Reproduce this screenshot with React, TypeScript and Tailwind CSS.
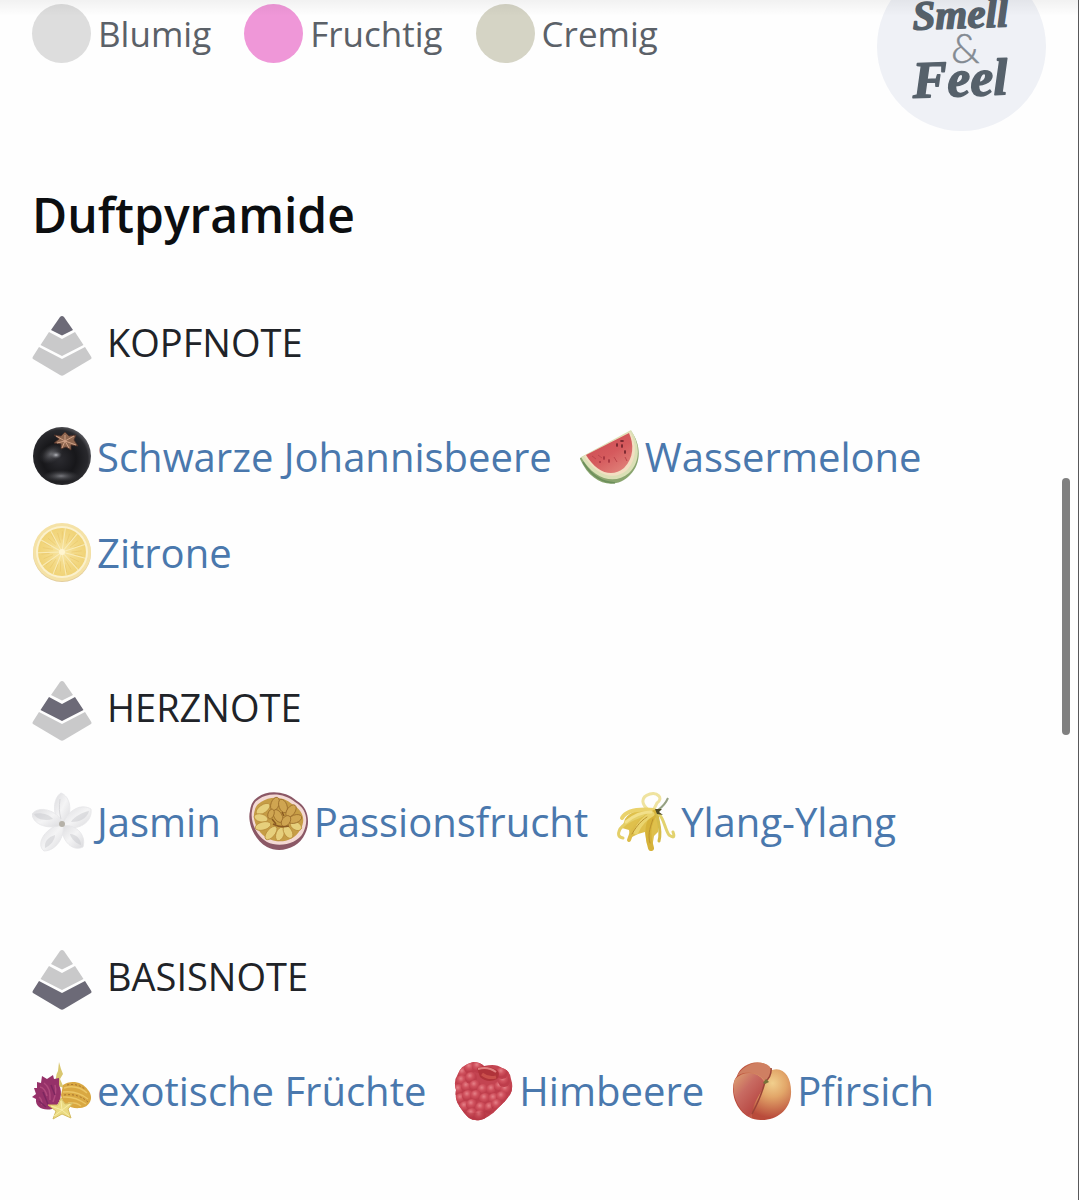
import type { ReactNode } from 'react';

type Layer = 'top' | 'middle' | 'base';

interface Ingredient {
  name: string;
  icon: ReactNode;
}

interface NoteGroup {
  title: string;
  layer: Layer;
  ingredients: Ingredient[];
}

const iconClass = 'h-[60px] w-[60px] shrink-0';

function BlackcurrantIcon() {
  return (
    <svg viewBox="0 0 60 60" className={iconClass} aria-hidden="true">
      <defs>
        <radialGradient id="currant" cx="0.45" cy="0.55" r="0.58">
          <stop offset="0" stopColor="#2c2c31" />
          <stop offset="0.5" stopColor="#17171a" />
          <stop offset="0.85" stopColor="#29292d" />
          <stop offset="1" stopColor="#606065" />
        </radialGradient>
        <radialGradient id="currantShine">
          <stop offset="0" stopColor="#b9bac0" />
          <stop offset="1" stopColor="#55565b" stopOpacity="0" />
        </radialGradient>
      </defs>
      <circle cx="30" cy="29" r="29" fill="url(#currant)" />
      <ellipse cx="19" cy="27" rx="13" ry="9" fill="url(#currantShine)" opacity="0.5" transform="rotate(-30 19 27)" />
      <ellipse cx="24" cy="28" rx="6" ry="4" fill="url(#currantShine)" />
      <ellipse cx="29" cy="49" rx="18" ry="6" fill="url(#currantShine)" opacity="0.6" />
      <path
        d="M22 8L29 9L33 5L37 9L44 8L42 13L46 19L39 18L39 23L34 20L29 22L29 17L22 16L27 12Z"
        fill="#8f6750"
        stroke="#4c3028"
        strokeWidth="0.8"
      />
      <path d="M24 9L33 14L42 9M25 16L33 14L44 18M33 8V14L30 21M33 14L37 21" stroke="#d0a186" fill="none" />
    </svg>
  );
}

function WatermelonIcon() {
  return (
    <svg viewBox="0 0 60 60" className={iconClass} aria-hidden="true">
      <defs>
        <linearGradient id="melon" x1="0" y1="0" x2="0.7" y2="1">
          <stop offset="0" stopColor="#cb4a50" />
          <stop offset="0.6" stopColor="#d55a5d" />
          <stop offset="1" stopColor="#e08078" />
        </linearGradient>
      </defs>
      <path d="M0 31L51 4C61 17 62 36 50 48C36 63 12 59 0 32Z" fill="#8aa56f" />
      <path d="M1 30L51 3C60 17 61 34 49 46C35 58 14 53 1 30Z" fill="#dbe0b6" />
      <path d="M4 29L50 5C57 18 57 33 46 44C33 54 16 48 4 29Z" fill="#f2dfc2" />
      <path d="M6 28L49 6C54 17 54 31 44 41C32 51 17 46 6 28Z" fill="url(#melon)" />
      <path d="M3 35Q15 55 35 56" stroke="#5f8653" strokeWidth="1.5" fill="none" opacity="0.7" />
      <g fill="#75272f">
        <ellipse cx="42" cy="14" rx="2" ry="1" />
        <ellipse cx="37" cy="18" rx="1" ry="2" />
        <ellipse cx="42" cy="19" rx="1" ry="2" />
        <ellipse cx="45" cy="25" rx="1" ry="2" />
      </g>
      <g fill="#a53540">
        <ellipse cx="24" cy="31" rx="1" ry="2" />
        <ellipse cx="29" cy="34" rx="1" ry="2" />
        <ellipse cx="20" cy="35" rx="1" ry="1" />
      </g>
      <path d="M18 28L22 31M34 30L37 35M45 30L47 34M12 29L16 32" stroke="#bd464c" fill="none" />
    </svg>
  );
}

const lemonSpokes = [8, 40, 72, 105, 138, 170, 202, 235, 268, 300, 332];

function LemonIcon() {
  return (
    <svg viewBox="0 0 60 60" className={iconClass} aria-hidden="true">
      <defs>
        <radialGradient id="lemon">
          <stop offset="0" stopColor="#f8e6a6" />
          <stop offset="0.6" stopColor="#f3d985" />
          <stop offset="1" stopColor="#f0d377" />
        </radialGradient>
      </defs>
      <circle cx="30" cy="30" r="29" fill="#e2cd9c" />
      <circle cx="30" cy="29" r="29" fill="#f5e2a6" />
      <circle cx="30" cy="29" r="26" fill="#fbf1cd" />
      <circle cx="30" cy="29" r="24" fill="url(#lemon)" />
      {lemonSpokes.map((angle) => (
        <g key={angle} transform={`rotate(${angle} 30 29)`}>
          <path d="M30 28V5" stroke="#fbf0c3" opacity="0.8" />
          <path d="M33 20L35 10M36 18L40 11" stroke="#e5bd5c" strokeWidth="0.7" opacity="0.5" />
        </g>
      ))}
      <circle cx="30" cy="29" r="3" fill="#fff5d0" />
    </svg>
  );
}

function JasmineIcon() {
  return (
    <svg viewBox="0 0 60 60" className={iconClass} aria-hidden="true">
      <defs>
        <linearGradient id="petal" x1="0" y1="0" x2="1" y2="1">
          <stop offset="0" stopColor="#dcdcdf" />
          <stop offset="0.5" stopColor="#f4f4f5" />
          <stop offset="1" stopColor="#dadadd" />
        </linearGradient>
      </defs>
      <g fill="url(#petal)" stroke="#e6e6e8" strokeWidth="0.8">
        <path d="M28 32C20 22 21 6 29 1C38 4 42 20 32 32Z" />
        <path d="M31 32C36 18 49 11 59 17C61 30 46 40 31 34Z" />
        <path d="M30 34C42 31 55 42 51 55C41 60 31 50 29 36Z" />
        <path d="M31 33C33 45 24 59 12 59C4 53 11 37 29 32Z" />
        <path d="M30 33C17 38 1 33 0 22C7 13 25 18 31 31Z" />
      </g>
      <g fill="#c4c5ca" opacity="0.45">
        <path d="M2 22C8 20 17 22 21 27C13 29 5 28 2 22Z" />
        <path d="M57 19C52 20 42 24 39 30C47 30 55 27 57 19Z" />
        <path d="M13 56C18 54 23 48 23 43C16 45 12 50 13 56Z" />
        <path d="M49 53C45 52 39 47 38 42C44 42 49 47 49 53Z" />
      </g>
      <path d="M28 7C27 15 27 20 29 27" fill="none" stroke="#d9d9dc" />
      <circle cx="30" cy="32" r="3" fill="#b5b1a8" />
    </svg>
  );
}

function PassionFruitIcon() {
  return (
    <svg viewBox="0 0 60 60" className={iconClass} aria-hidden="true">
      <path d="M9 5C18-2 36-2 48 9C59 15 62 30 56 42C50 56 31 62 18 55C5 48-2 30 1 19C2 13 3 9 9 5Z" fill="#8b5866" />
      <path d="M10 7C19 0 36 1 46 10C58 17 60 29 54 41C48 52 30 56 18 50C7 44 1 29 3 19C4 13 5 10 10 7Z" fill="#f3d9d4" />
      <path d="M12 10C21 4 34 4 43 12C55 19 57 29 51 38C45 49 31 52 20 47C9 42 4 29 5 22C6 16 7 13 12 10Z" fill="#c69d45" />
      <g fill="#e6cf7c" stroke="#b88d3c" strokeWidth="0.8">
        <ellipse cx="14" cy="17" rx="8" ry="4" transform="rotate(-35 14 17)" />
        <ellipse cx="12" cy="26" rx="7" ry="4" transform="rotate(15 12 26)" />
        <ellipse cx="14" cy="34" rx="8" ry="4" transform="rotate(-15 14 34)" />
        <ellipse cx="22" cy="41" rx="8" ry="4" transform="rotate(-50 22 41)" />
        <ellipse cx="31" cy="42" rx="7" ry="4" transform="rotate(-70 31 42)" />
        <ellipse cx="39" cy="40" rx="7" ry="4" transform="rotate(60 39 40)" />
        <ellipse cx="47" cy="34" rx="6" ry="4" transform="rotate(30 47 34)" />
      </g>
      <g fill="#cfa551" stroke="#9a6c2b" strokeWidth="0.8">
        <ellipse cx="26" cy="12" rx="4" ry="7" transform="rotate(20 26 12)" />
        <ellipse cx="34" cy="14" rx="4" ry="7" transform="rotate(-20 34 14)" />
        <ellipse cx="42" cy="19" rx="4" ry="7" transform="rotate(35 42 19)" />
        <ellipse cx="46" cy="27" rx="4" ry="7" transform="rotate(70 46 27)" />
        <ellipse cx="29" cy="24" rx="4" ry="7" transform="rotate(-30 29 24)" />
        <ellipse cx="37" cy="29" rx="4" ry="6" transform="rotate(35 37 29)" />
        <ellipse cx="22" cy="22" rx="3" ry="5" transform="rotate(20 22 22)" />
      </g>
      <path d="M24 32Q31 36 40 34M23 27L27 32M33 20L35 24" fill="none" stroke="#8a5a22" strokeWidth="1.5" />
    </svg>
  );
}

function YlangIcon() {
  return (
    <svg viewBox="0 0 60 60" className={iconClass} aria-hidden="true">
      <path d="M34 19C25 13 24 5 34 2C41 0 48 6 41 11L38 17" fill="none" stroke="#efe3a0" strokeWidth="3" />
      <path d="M38 17C26 17 14 19 9 27L6 36L13 38L14 46L22 42L29 40L31 52L36 56L38 44L42 40L43 24Z" fill="#dfc04c" />
      <g fill="none" strokeLinecap="round">
        <path d="M38 18C27 17 11 17 6 26" stroke="#ead26c" strokeWidth="4" />
        <path d="M37 20C24 24 11 28 4 37Q0 45 7 46" stroke="#e4cf68" strokeWidth="3" />
        <path d="M38 20C29 24 17 34 13 48" stroke="#dcbc49" strokeWidth="4" />
        <path d="M39 21C31 32 31 42 35 56" stroke="#d6b239" strokeWidth="6" />
        <path d="M36 22C27 27 23 33 20 40" stroke="#ead46e" strokeWidth="5" />
        <path d="M41 22C42 31 46 38 43 49" stroke="#d4bb49" strokeWidth="3" />
        <path d="M43 22C48 27 49 37 53 43Q60 48 57 40" stroke="#e2d26e" strokeWidth="3" />
        <path d="M35 20C25 20 17 24 10 30" stroke="#f2e08a" strokeWidth="3" />
        <path d="M37 27C33 38 32 44 34 51M31 25C23 30 19 37 16 42" stroke="#bb9330" />
      </g>
      <path d="M42 18Q49 13 52 6" fill="none" stroke="#95a183" strokeWidth="2" />
      <path d="M39 17L46 17L43 20L47 23L41 22Z" fill="#4e4a24" />
    </svg>
  );
}

function ExoticFruitsIcon() {
  return (
    <svg viewBox="0 0 60 60" className={iconClass} aria-hidden="true">
      <path d="M26 25Q22 16 26 10L27 1L29 8L31 13L28 18L32 27Z" fill="#d9c770" />
      <path
        d="M2 27L5 27L5 21L9 22L10 15L15 18L21 14L22 18L27 17L27 24C31 31 29 44 20 48C11 50 3 46 4 38L0 36L4 33Z"
        fill="#963169"
      />
      <path
        d="M8 26Q13 27 15 35M12 22Q19 27 18 39M7 36Q10 38 10 44M23 24Q25 31 21 41"
        fill="none"
        stroke="#b04a7d"
        strokeWidth="1.5"
      />
      <path d="M11 31L16 43M19 24L23 34M7 40L14 46" stroke="#7c2760" strokeWidth="1.5" fill="none" />
      <path d="M31 24C38 19 50 20 56 29C63 37 57 47 48 47C38 48 30 43 29 34Z" fill="#d9a842" />
      <path
        d="M32 27Q45 23 55 32M31 31Q45 29 56 38M31 36Q43 35 54 43M36 42Q44 41 49 45"
        fill="none"
        stroke="#ebc565"
        strokeWidth="1.5"
      />
      <path d="M35 24Q45 22 53 28M32 34Q46 32 56 41" fill="none" stroke="#a97430" strokeDasharray="2 2" />
      <path
        d="M29 37L33 43L41 42L36 48L39 57L30 53L21 58L24 50L16 44L26 44Z"
        fill="#ebdb83"
        stroke="#d5bc62"
      />
      <path d="M29 40L30 49L38 43M30 49L37 55M30 49L22 55M30 49L19 45" fill="none" stroke="#f8eda8" />
    </svg>
  );
}

const drupelets = [
  [9, 12], [16, 7], [24, 6], [8, 20], [5, 29], [13, 26], [17, 17], [21, 25], [29, 29],
  [38, 29], [46, 26], [52, 29], [50, 20], [48, 12], [7, 38], [14, 35], [22, 35],
  [31, 38], [40, 38], [48, 36], [11, 46], [18, 44], [27, 47], [36, 47], [43, 44], [18, 53], [26, 55],
];

function RaspberryIcon() {
  return (
    <svg viewBox="0 0 60 60" className={iconClass} aria-hidden="true">
      <defs>
        <radialGradient id="drupe" cx="0.4" cy="0.3">
          <stop offset="0" stopColor="#e58188" />
          <stop offset="0.5" stopColor="#d0525e" />
          <stop offset="1" stopColor="#be3d4b" />
        </radialGradient>
        <clipPath id="berryShape">
          <path d="M4 13Q7 4 19 1Q26 1 30 5Q42 2 48 7Q56 9 57 18Q60 27 56 34Q51 41 44 47Q35 57 26 59Q15 61 8 49Q0 40 2 29Q-1 20 4 13Z" />
        </clipPath>
      </defs>
      <g clipPath="url(#berryShape)">
        <path d="M0 0H60V60H0Z" fill="#c34451" />
        {drupelets.map(([x, y]) => (
          <circle key={`${x}-${y}`} cx={x} cy={y} r="6" fill="url(#drupe)" />
        ))}
        <path d="M9 50Q24 56 40 45L32 60H10Z" fill="#a92f3d" opacity="0.3" />
      </g>
      <path d="M23 7Q33 3 43 9Q47 13 43 18Q34 23 26 16Z" fill="#b0333a" />
      <path d="M24 8Q34 5 42 11" fill="none" stroke="#e08080" strokeWidth="2" />
      <path d="M28 13Q34 18 42 16" fill="none" stroke="#c94f4b" strokeWidth="3" />
    </svg>
  );
}

function PeachIcon() {
  return (
    <svg viewBox="0 0 60 60" className={iconClass} aria-hidden="true">
      <defs>
        <radialGradient id="peachRight" cx="0.68" cy="0.36" r="0.6">
          <stop offset="0" stopColor="#f1cf8d" />
          <stop offset="0.4" stopColor="#e2a669" />
          <stop offset="1" stopColor="#b94b3b" />
        </radialGradient>
        <linearGradient id="peachLeft" x1="0" y1="0" x2="0.8" y2="1">
          <stop offset="0" stopColor="#dfa673" />
          <stop offset="0.4" stopColor="#c86b62" />
          <stop offset="0.8" stopColor="#b94a45" />
          <stop offset="1" stopColor="#d9874f" />
        </linearGradient>
      </defs>
      <path d="M5 15C9 3 26-3 37 5L40 9C52 5 60 17 59 33C58 49 45 59 30 59C13 60 1 44 1 28Q1 20 5 15Z" fill="url(#peachRight)" />
      <path d="M3 18C12 9 27 10 33 22C29 34 19 42 20 57C6 51-2 31 3 18Z" fill="url(#peachLeft)" />
      <path d="M5 15C12 2 29-2 38 6L39 12L33 21C28 12 16 8 5 15Z" fill="#cf7f62" />
      <path d="M39 7Q40 15 33 21Q29 36 20 53" fill="none" stroke="#9a4338" strokeWidth="1.5" />
      <path d="M31 22L34 18L37 21L33 23Z" fill="#777239" />
    </svg>
  );
}

function PyramidIcon({ active }: { active: Layer }) {
  const fill = (layer: Layer) => (layer === active ? '#6c6a77' : '#c9c9ca');

  return (
    <svg viewBox="0 0 60 60" className={iconClass} aria-hidden="true">
      <path d="M28 1Q30-1 32 1L41 14L30 19.5L19 14Z" fill={fill('top')} />
      <path d="M17 16L30 23L43 16L51.500 29L30 40L8.500 29Z" fill={fill('middle')} />
      <path d="M7 31L30 43L53 31L59 40.500Q60 42 59 43L32 59Q30 60.500 28 59L1 43Q0 42 1 40.500Z" fill={fill('base')} />
    </svg>
  );
}

function SmellFeelLogo() {
  return (
    <div className="-mt-[38px] h-[169px] w-[169px] shrink-0 rounded-full bg-[#eff1f6]">
      <svg viewBox="0 0 169 169" className="h-full w-full" role="img" aria-label="Smell & Feel">
        <g
          fill="#56616b"
          stroke="#56616b"
          strokeWidth="1.5"
          strokeLinejoin="round"
          fontFamily="'Liberation Serif', serif"
          fontStyle="italic"
          fontWeight="700"
        >
          <text x="36" y="66" fontSize="41" transform="rotate(-2 84 66)">
            Smell
          </text>
          <text x="36" y="134" fontSize="52" transform="rotate(-2 84 134)">
            Feel
          </text>
        </g>
        <text
          x="74"
          y="101"
          fontSize="41"
          fill="#838a92"
          stroke="#838a92"
          strokeWidth="0.5"
          fontFamily="Lato, sans-serif"
          fontWeight="300"
        >
          &amp;
        </text>
      </svg>
    </div>
  );
}

const accords = [
  { name: 'Blumig', dot: 'bg-[#dddddd]' },
  { name: 'Fruchtig', dot: 'bg-[#ef97d8]' },
  { name: 'Cremig', dot: 'bg-[#d5d4c5]' },
];

const noteGroups: NoteGroup[] = [
  {
    title: 'KOPFNOTE',
    layer: 'top',
    ingredients: [
      { name: 'Schwarze Johannisbeere', icon: <BlackcurrantIcon /> },
      { name: 'Wassermelone', icon: <WatermelonIcon /> },
      { name: 'Zitrone', icon: <LemonIcon /> },
    ],
  },
  {
    title: 'HERZNOTE',
    layer: 'middle',
    ingredients: [
      { name: 'Jasmin', icon: <JasmineIcon /> },
      { name: 'Passionsfrucht', icon: <PassionFruitIcon /> },
      { name: 'Ylang-Ylang', icon: <YlangIcon /> },
    ],
  },
  {
    title: 'BASISNOTE',
    layer: 'base',
    ingredients: [
      { name: 'exotische Früchte', icon: <ExoticFruitsIcon /> },
      { name: 'Himbeere', icon: <RaspberryIcon /> },
      { name: 'Pfirsich', icon: <PeachIcon /> },
    ],
  },
];

function NoteSection({ group }: { group: NoteGroup }) {
  return (
    <section>
      <h3 className="flex items-center gap-[15px] text-[38px] leading-[52px] text-[#202328]">
        <PyramidIcon active={group.layer} />
        <span className="-mt-2">{group.title}</span>
      </h3>
      <ul className="mt-[51px] flex flex-wrap gap-x-7 gap-y-9">
        {group.ingredients.map(({ name, icon }) => (
          <li key={name}>
            <a href="#" className="flex items-center gap-[5px] text-[40px] leading-[58px] text-[#4a78ad]">
              {icon}
              <span>{name}</span>
            </a>
          </li>
        ))}
      </ul>
    </section>
  );
}

export default function App() {
  return (
    <div className="relative min-h-screen overflow-hidden border-r border-[#58585a] bg-[#fefefe] font-['Open_Sans',sans-serif]">
      <div className="absolute inset-x-0 top-0 h-4 bg-linear-to-b from-black/5 to-transparent" />
      <div className="absolute top-[478px] right-2 h-[257px] w-2 rounded-full bg-[#808080]" />

      <main className="px-8 pb-20">
        <div className="flex items-start justify-between">
          <ul className="flex gap-[33px] pt-1">
            {accords.map(({ name, dot }) => (
              <li key={name} className="flex items-center gap-[7px] text-[35px] leading-[48px] text-[#5b6168]">
                <span className={`h-[59px] w-[59px] rounded-full ${dot}`} />
                {name}
              </li>
            ))}
          </ul>
          <SmellFeelLogo />
        </div>

        <h2 className="mt-[52px] text-[48px] leading-[64px] font-semibold text-[#0c0e10]">Duftpyramide</h2>

        <div className="mt-[69px] flex flex-col gap-[98px]">
          {noteGroups.map((group) => (
            <NoteSection key={group.title} group={group} />
          ))}
        </div>
      </main>
    </div>
  );
}
